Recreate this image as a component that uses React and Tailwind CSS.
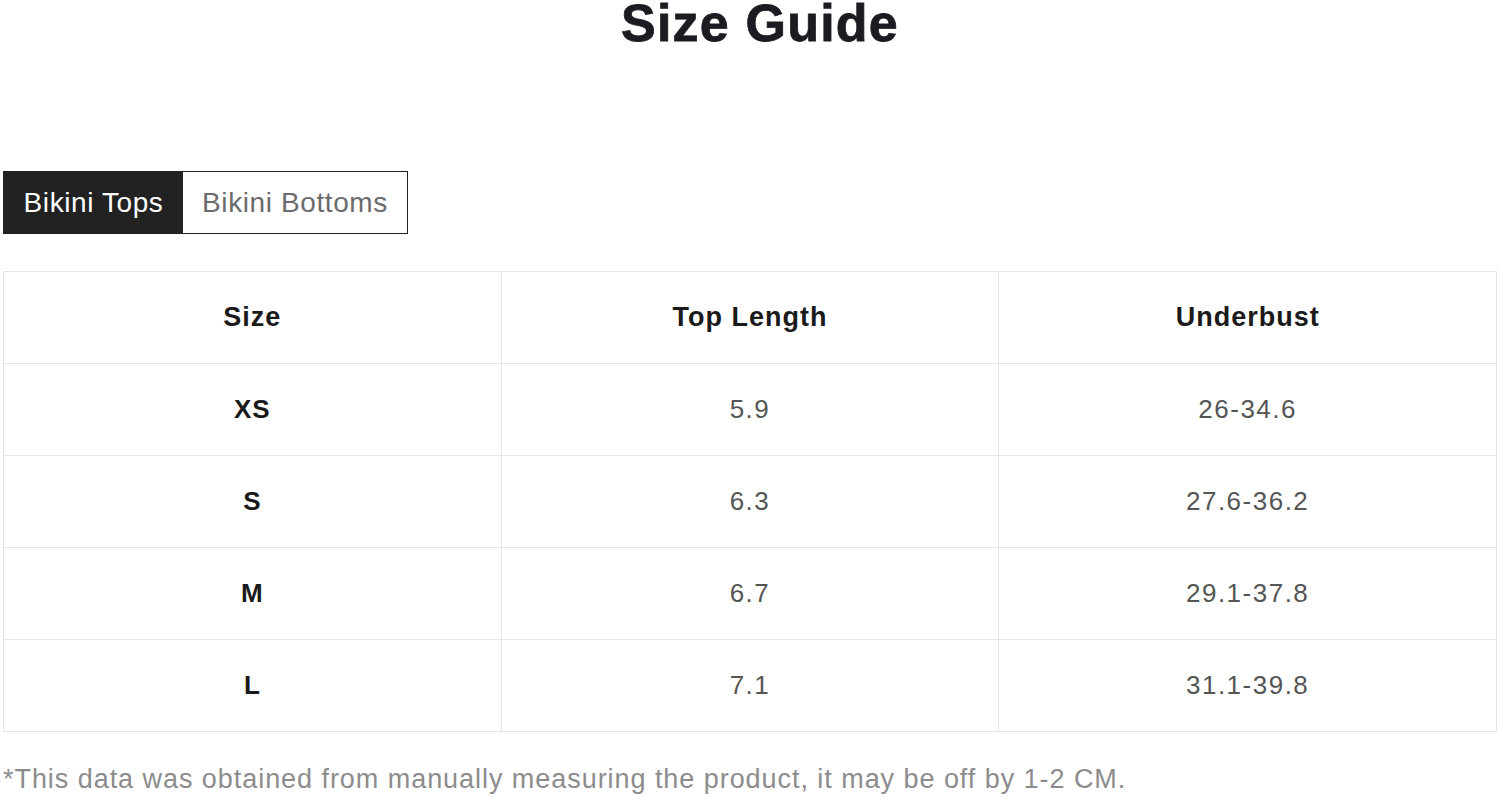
const rows = [
  { size: "XS", top: "5.9", under: "26-34.6" },
  { size: "S", top: "6.3", under: "27.6-36.2" },
  { size: "M", top: "6.7", under: "29.1-37.8" },
  { size: "L", top: "7.1", under: "31.1-39.8" },
];

export default function App() {
  return (
    <div className="w-[1500px] h-[800px] bg-white px-[3px] font-['Liberation_Sans',Arial,sans-serif] overflow-hidden">
      <h1 className="pl-[20px] text-center text-[52px] leading-[46px] font-bold text-[#1b1c22] tracking-[1.2px] [-webkit-text-stroke:0.8px_#1b1c22]">
        Size Guide
      </h1>

      <div className="mt-[125px] flex">
        <div className="flex border border-[#222] h-[63px]">
          <button className="w-[179px] bg-[#222] text-white text-[28px] tracking-[0.6px] flex items-center justify-center">
            Bikini Tops
          </button>
          <button className="w-[224px] bg-white text-[#6b6b6b] text-[28px] tracking-[0.6px] flex items-center justify-center">
            Bikini Bottoms
          </button>
        </div>
      </div>

      <table className="mt-[37px] w-[1494px] border-collapse table-fixed border border-[#e6e6e6]">
        <thead>
          <tr className="h-[92px]">
            <th className="border border-[#e6e6e6] text-[27px] font-bold text-[#1a1a1a] tracking-[1px]">Size</th>
            <th className="border border-[#e6e6e6] text-[27px] font-bold text-[#1a1a1a] tracking-[1px]">Top Length</th>
            <th className="border border-[#e6e6e6] text-[27px] font-bold text-[#1a1a1a] tracking-[1px]">Underbust</th>
          </tr>
        </thead>
        <tbody>
          {rows.map((r) => (
            <tr key={r.size} className="h-[92px]">
              <td className="border border-[#e6e6e6] text-center text-[26px] font-bold text-[#1a1a1a] tracking-[1px]">{r.size}</td>
              <td className="border border-[#e6e6e6] text-center text-[26px] text-[#555] tracking-[1.5px]">{r.top}</td>
              <td className="border border-[#e6e6e6] text-center text-[26px] text-[#555] tracking-[1.5px]">{r.under}</td>
            </tr>
          ))}
        </tbody>
      </table>

      <p className="mt-[34px] text-[27px] text-[#8c8c8c] tracking-[0.95px] leading-none">
        *This data was obtained from manually measuring the product, it may be off by 1-2 CM.
      </p>
    </div>
  );
}
